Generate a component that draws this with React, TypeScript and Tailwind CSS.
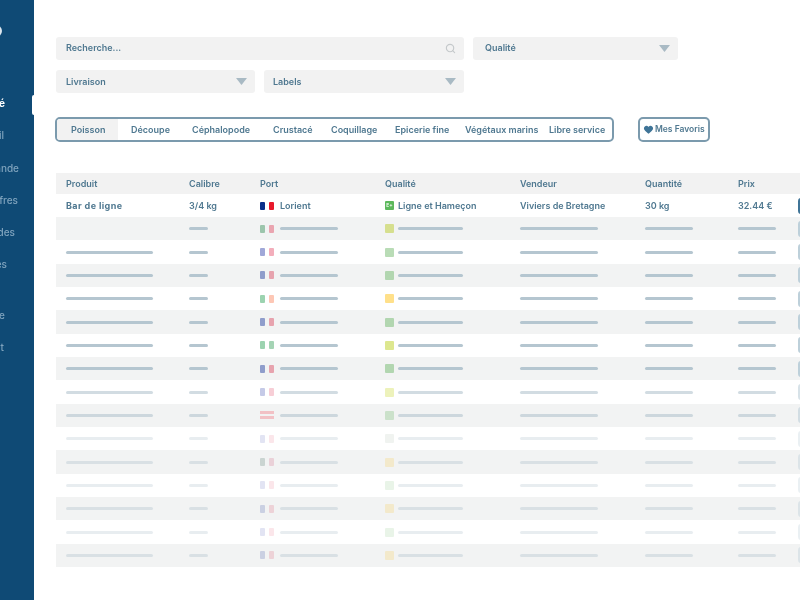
import { Search, Heart } from "lucide-react";

const tabs = [
  { label: "Découpe", cls: "ml-[13px] w-[61px]" },
  { label: "Céphalopode", cls: "w-[81px]" },
  { label: "Crustacé", cls: "w-[58px]" },
  { label: "Coquillage", cls: "w-[64px]" },
  { label: "Epicerie fine", cls: "w-[70px]" },
  { label: "Végétaux marins", cls: "w-[84px]" },
  { label: "Libre service", cls: "" },
];

const navItems = [
  { label: "Marché", cls: "w-[65px] font-bold text-white" },
  { label: "Accueil", cls: "w-[64px]" },
  { label: "Commande", cls: "w-[79px]" },
  { label: "Mes offres", cls: "w-[78px]" },
  { label: "Demandes", cls: "w-[75px]" },
  { label: "Factures", cls: "mb-[18px] w-[67px]" },
  { label: "Profile", cls: "w-[65px]" },
  { label: "Contact", cls: "w-[64px]" },
];

const rows = [
  { left: "bg-[#9cc5ac]", right: "bg-[#eaa5b0]", square: "bg-[#d6df8e]", fade: "opacity-100", gray: true },
  { left: "bg-[#a0a8d8]", right: "bg-[#f3aebb]", square: "bg-[#b9dcb6]", fade: "opacity-100", gray: false },
  { left: "bg-[#8f9dcb]", right: "bg-[#e7a3ae]", square: "bg-[#b2d6b0]", fade: "opacity-100", gray: true },
  { left: "bg-[#9cd3b0]", right: "bg-[#fdc7b5]", square: "bg-[#ffe08a]", fade: "opacity-100", gray: false },
  { left: "bg-[#8f9dcb]", right: "bg-[#e7a3ae]", square: "bg-[#b2d6b0]", fade: "opacity-100", gray: true },
  { left: "bg-[#9cd3b0]", right: "bg-[#a5d4b5]", square: "bg-[#dde78f]", fade: "opacity-100", gray: false },
  { left: "bg-[#8f9dcb]", right: "bg-[#e7a3ae]", square: "bg-[#b2d6b0]", fade: "opacity-100", gray: true },
  { left: "bg-[#a0a8d8]", right: "bg-[#f3aebb]", square: "bg-[#e2eb8e]", fade: "opacity-60", gray: false },
  { left: "bg-[#f3a0a8]", right: "bg-[#f3a0a8]", square: "bg-[#b2d6b0]", fade: "opacity-60", gray: true, stripes: true },
  { left: "bg-[#a0a8d8]", right: "bg-[#f3aebb]", square: "bg-[#d0d8d0]", fade: "opacity-30", gray: false },
  { left: "bg-[#8fa8a0]", right: "bg-[#e0a0b0]", square: "bg-[#f5dc90]", fade: "opacity-40", gray: true },
  { left: "bg-[#a0a8d8]", right: "bg-[#f3aebb]", square: "bg-[#b9dcb6]", fade: "opacity-30", gray: false },
  { left: "bg-[#8f9dcb]", right: "bg-[#e7a3ae]", square: "bg-[#f5dc90]", fade: "opacity-40", gray: true },
  { left: "bg-[#a0a8d8]", right: "bg-[#f3aebb]", square: "bg-[#b9dcb6]", fade: "opacity-30", gray: false },
  { left: "bg-[#8f9dcb]", right: "bg-[#e7a3ae]", square: "bg-[#f5dc90]", fade: "opacity-40", gray: true },
];

const gridCols = "grid grid-cols-[123px_71px_125px_135px_125px_93px_60px_40px] items-center pl-[10px]";

const Caret = () => (
  <svg width="11" height="7" viewBox="0 0 11 7" className="shrink-0">
    <path d="M0 0h11L5.5 7z" fill="#a9bac4" />
  </svg>
);

const Field = ({ label, className, pl = "pl-[10px]" }: { label: string; className: string; pl?: string }) => (
  <div className={`flex h-[23px] items-center justify-between rounded-[3px] bg-[#f2f2f2] ${pl} pr-[8px] ${className}`}>
    <span>{label}</span>
    <Caret />
  </div>
);

const App = () => {
  return (
    <div
      className="flex h-[600px] w-[800px] overflow-hidden bg-white text-[9px] font-semibold text-[#4f7890] blur-[0.4px]"
      style={{ fontFamily: '"Inter", "Noto Sans", sans-serif' }}
    >
      {/* Sidebar */}
      <div className="relative h-full w-[34px] shrink-0 overflow-hidden bg-[#0f4a75]">
        <div className="absolute right-0 top-[95px] h-[20px] w-[2px] rounded-l-[2px] bg-white" />
        <div className="-ml-[60px] flex w-[120px] flex-col pt-[25px]">
          <div className="mb-[59px] ml-[47px] h-[12px] w-[15px] rounded-full border-2 border-[#dce6ee]" />
          <div className="flex flex-col gap-[18.3px] text-[10px] font-medium leading-[14px] text-[#7fa3bd]">
            {navItems.map((item) => (
              <div key={item.label} className={`flex justify-end whitespace-nowrap ${item.cls}`}>
                {item.label}
              </div>
            ))}
          </div>
        </div>
      </div>

      {/* Main */}
      <div className="flex min-w-0 flex-1 flex-col pl-[22px] pt-[37px]">
        {/* Filters */}
        <div className="flex gap-[9px]">
          <div className="flex h-[23px] w-[408px] items-center justify-between rounded-[3px] bg-[#f2f2f2] pb-[1px] pl-[10px] pr-[8px]">
            <span>Recherche...</span>
            <Search size={11} strokeWidth={2.5} className="text-[#c5c9cb]" />
          </div>
          <Field label="Qualité" className="w-[205px] pb-[1px]" pl="pl-[12px]" />
        </div>
        <div className="mt-[10px] flex gap-[9px]">
          <Field label="Livraison" className="w-[199px]" />
          <Field label="Labels" className="w-[200px]" pl="pl-[9px]" />
        </div>

        {/* Tabs */}
        <div className="mt-[24px] flex items-center">
          <div className="-ml-[1px] flex h-[25px] w-[559px] items-center rounded-[5px] border-2 border-[#7b9aad]">
            <div className="flex h-full w-[61px] items-center rounded-l-[3px] bg-[#f2f2f2] pl-[14px]">Poisson</div>
            {tabs.map((tab) => (
              <div key={tab.label} className={`whitespace-nowrap ${tab.cls}`}>
                {tab.label}
              </div>
            ))}
          </div>
          <div className="ml-[24px] flex h-[25px] w-[72px] items-center gap-[1px] rounded-[5px] border-2 border-[#7b9aad] pl-[3px]">
            <Heart size={11} fill="#3f7497" strokeWidth={0} className="shrink-0" />
            <span className="whitespace-nowrap text-[8.5px]">Mes Favoris</span>
          </div>
        </div>

        {/* Table */}
        <div className="mt-[31px] w-[790px] shrink-0">
          <div className={`${gridCols} h-[21px] bg-[#f2f2f2]`}>
            <span>Produit</span>
            <span>Calibre</span>
            <span>Port</span>
            <span>Qualité</span>
            <span>Vendeur</span>
            <span>Quantité</span>
            <span>Prix</span>
          </div>
          <div className={`${gridCols} h-[23px]`}>
            <span className="font-bold tracking-[0.4px]">Bar de ligne</span>
            <span>3/4 kg</span>
            <div className="flex items-center">
              <span className="h-[8px] w-[5px] rounded-[1px] bg-[#0a2f8a]" />
              <span className="ml-[4px] h-[8px] w-[5px] rounded-[1px] bg-[#e8192c]" />
              <span className="ml-[6px]">Lorient</span>
            </div>
            <div className="flex items-center">
              <span className="flex h-[9px] w-[9px] items-center justify-center rounded-[1px] bg-[#5cb85c] text-[5px] leading-none text-white">
                E+
              </span>
              <span className="ml-[4px] whitespace-nowrap">Ligne et Hameçon</span>
            </div>
            <span className="whitespace-nowrap">Viviers de Bretagne</span>
            <span>30 kg</span>
            <span>32.44 €</span>
            <span className="h-[16px] w-[10px] rounded-[3px] bg-[#3f7497]" />
          </div>
          {rows.map((row, i) => (
            <div key={i} className={`${row.gray ? "bg-[#f2f3f3]" : "bg-white"} h-[23.35px]`}>
              <div className={`${gridCols} h-full ${row.fade}`}>
                <span className={`h-[3px] w-[87px] rounded-full bg-[#b5c6d0] ${i === 0 ? "invisible" : ""}`} />
                <span className="h-[3px] w-[19px] rounded-full bg-[#b5c6d0]" />
                <div className="flex items-center">
                  {row.stripes ? (
                    <span className="flex h-[8px] w-[14px] flex-col justify-between">
                      <span className="h-[3px] bg-[#f3a0a8]" />
                      <span className="h-[3px] bg-[#f3a0a8]" />
                    </span>
                  ) : (
                    <>
                      <span className={`h-[8px] w-[5px] rounded-[1px] ${row.left}`} />
                      <span className={`ml-[4px] h-[8px] w-[5px] rounded-[1px] ${row.right}`} />
                    </>
                  )}
                  <span className="ml-[6px] h-[3px] w-[58px] rounded-full bg-[#b5c6d0]" />
                </div>
                <div className="flex items-center">
                  <span className={`h-[9px] w-[9px] rounded-[1px] ${row.square}`} />
                  <span className="ml-[4px] h-[3px] w-[65px] rounded-full bg-[#b5c6d0]" />
                </div>
                <span className="h-[3px] w-[78px] rounded-full bg-[#b5c6d0]" />
                <span className="h-[3px] w-[48px] rounded-full bg-[#b5c6d0]" />
                <span className="h-[3px] w-[38px] rounded-full bg-[#b5c6d0]" />
                <span className="h-[16px] w-[10px] rounded-[3px] bg-[#bdd0da]" />
              </div>
            </div>
          ))}
        </div>
      </div>
    </div>
  );
};

export default App;
